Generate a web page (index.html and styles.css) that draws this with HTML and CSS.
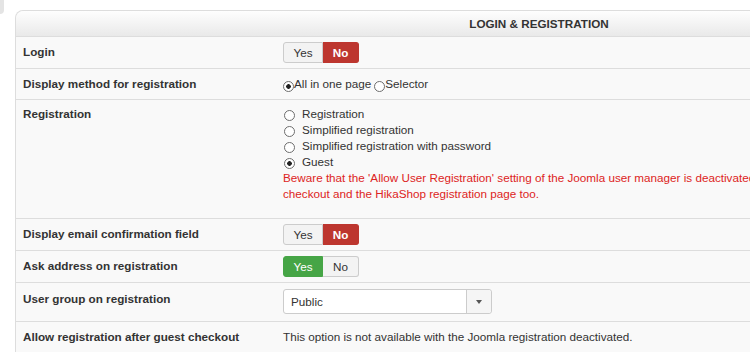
FILE: index.html
```html
<!DOCTYPE html>
<html>
<head>
  <title>Login &amp; Registration</title>
  <link rel="stylesheet" href="styles.css">
</head>
<body>
  <div class="side-tab"></div>

  <div class="panel">
    <div class="panel-title">LOGIN &amp; REGISTRATION</div>
    <table class="options">
      <colgroup>
        <col class="col-key">
        <col>
      </colgroup>
      <tr>
        <td class="key">Login</td>
        <td>
          <div class="switch">
            <span class="btn">Yes</span>
            <span class="btn active-no">No</span>
          </div>
        </td>
      </tr>
      <tr>
        <td class="key">Display method for registration</td>
        <td class="inline-radios">
          <label><input type="radio" name="method" checked>All in one page</label><label><input type="radio" name="method">Selector</label>
        </td>
      </tr>
      <tr>
        <td class="key key-stack">Registration</td>
        <td class="stack">
          <label><input type="radio" name="reg">Registration</label>
          <label><input type="radio" name="reg">Simplified registration</label>
          <label><input type="radio" name="reg">Simplified registration with password</label>
          <label><input type="radio" name="reg" checked>Guest</label>
          <div class="warning">Beware that the 'Allow User Registration' setting of the Joomla user manager is deactivated. It will affect the registration during checkout and the HikaShop registration page too.</div>
        </td>
      </tr>
      <tr>
        <td class="key">Display email confirmation field</td>
        <td>
          <div class="switch">
            <span class="btn">Yes</span>
            <span class="btn active-no">No</span>
          </div>
        </td>
      </tr>
      <tr>
        <td class="key">Ask address on registration</td>
        <td>
          <div class="switch">
            <span class="btn active-yes">Yes</span>
            <span class="btn">No</span>
          </div>
        </td>
      </tr>
      <tr>
        <td class="key key-select">User group on registration</td>
        <td class="select-cell">
          <div class="select">
            <span class="select-value">Public</span>
            <span class="select-arrow"></span>
          </div>
        </td>
      </tr>
      <tr>
        <td class="key">Allow registration after guest checkout</td>
        <td class="note">This option is not available with the Joomla registration deactivated.</td>
      </tr>
    </table>
  </div>
</body>
</html>
```

FILE: styles.css
```css
body {
  font-family: "Liberation Sans", Arial, sans-serif;
  font-size: 11.7px;
  color: #333;
  margin: 0;
  padding: 0;
  background-color: #fff;
  overflow: hidden;
  display: flex;
  align-items: flex-start;
}

.side-tab {
  width: 4px;
  height: 14px;
  background-color: #e4e4e4;
  border-radius: 0 0 4px 0;
  flex-shrink: 0;
}

.panel {
  flex-shrink: 0;
  width: 1046px;
  margin: 10px 0 0 11px;
  border: 1px solid #ddd;
  border-bottom: none;
  border-radius: 8px 8px 0 0;
  background-color: #f9f9f9;
}

.panel-title {
  height: 25px;
  line-height: 25px;
  text-align: center;
  font-weight: bold;
  border-bottom: 1px solid #ddd;
  border-radius: 8px 8px 0 0;
  background: linear-gradient(#fefefe, #e9e9e9);
}

.options {
  border-collapse: collapse;
  table-layout: fixed;
  width: 100%;
}

.col-key {
  width: 259px;
}

.options td {
  padding: 5px 8px;
  border-top: 1px solid #ddd;
  vertical-align: top;
  line-height: 20px;
}

.options tr:first-child td {
  border-top: none;
}

.options td.key {
  font-weight: bold;
  padding-left: 7px;
}

.options td.key-stack {
  padding-top: 4px;
}

.options td.key-select {
  padding-top: 6px;
}

.switch {
  display: inline-flex;
}

.btn {
  display: inline-block;
  height: 19px;
  line-height: 19px;
  padding: 0;
  border: 1px solid #ccc;
  background-color: #f3f3f3;
  color: #333;
  text-align: center;
}

.btn:first-child {
  border-radius: 3px 0 0 3px;
  width: 38px;
}

.btn:last-child {
  border-radius: 0 3px 3px 0;
  border-left: none;
  width: 35px;
}

.btn.active-no {
  background-color: #bd362f;
  border-color: #bd362f;
  color: #fff;
  font-weight: bold;
}

.btn.active-yes {
  background-color: #46a546;
  border-color: #46a546;
  color: #fff;
}

input[type="radio"] {
  appearance: none;
  -webkit-appearance: none;
  width: 11px;
  height: 11px;
  margin: 0;
  border: 1px solid #6d6d6d;
  border-radius: 50%;
  background-color: #fff;
  vertical-align: -3px;
}

input[type="radio"]:checked {
  background: radial-gradient(circle, #222 0, #222 2px, #fff 2.6px);
}

.inline-radios label {
  display: inline;
}

.inline-radios input[type="radio"] {
  vertical-align: -4px;
}

.inline-radios label + label input[type="radio"] {
  margin-left: 3px;
}

.options td.stack {
  line-height: 16px;
  padding-top: 6px;
  padding-bottom: 16px;
}

.stack label {
  display: block;
}

.stack input[type="radio"] {
  margin: 0 7px 0 1px;
}

.warning {
  color: #dd2423;
  max-width: 700px;
}

.options td.select-cell {
  padding-top: 6px;
  padding-bottom: 7px;
}

.select {
  display: flex;
  width: 207px;
  height: 23px;
  border: 1px solid #ccc;
  border-radius: 3px;
  background-color: #fff;
}

.select-value {
  flex: 1;
  padding-left: 7px;
  line-height: 23px;
}

.select-arrow {
  width: 24px;
  border-left: 1px solid #ccc;
  background-color: #f5f5f5;
  border-radius: 0 3px 3px 0;
  display: flex;
  align-items: center;
  justify-content: center;
}

.select-arrow::after {
  content: "";
  border-left: 3px solid transparent;
  border-right: 3px solid transparent;
  border-top: 4px solid #555;
}
```
